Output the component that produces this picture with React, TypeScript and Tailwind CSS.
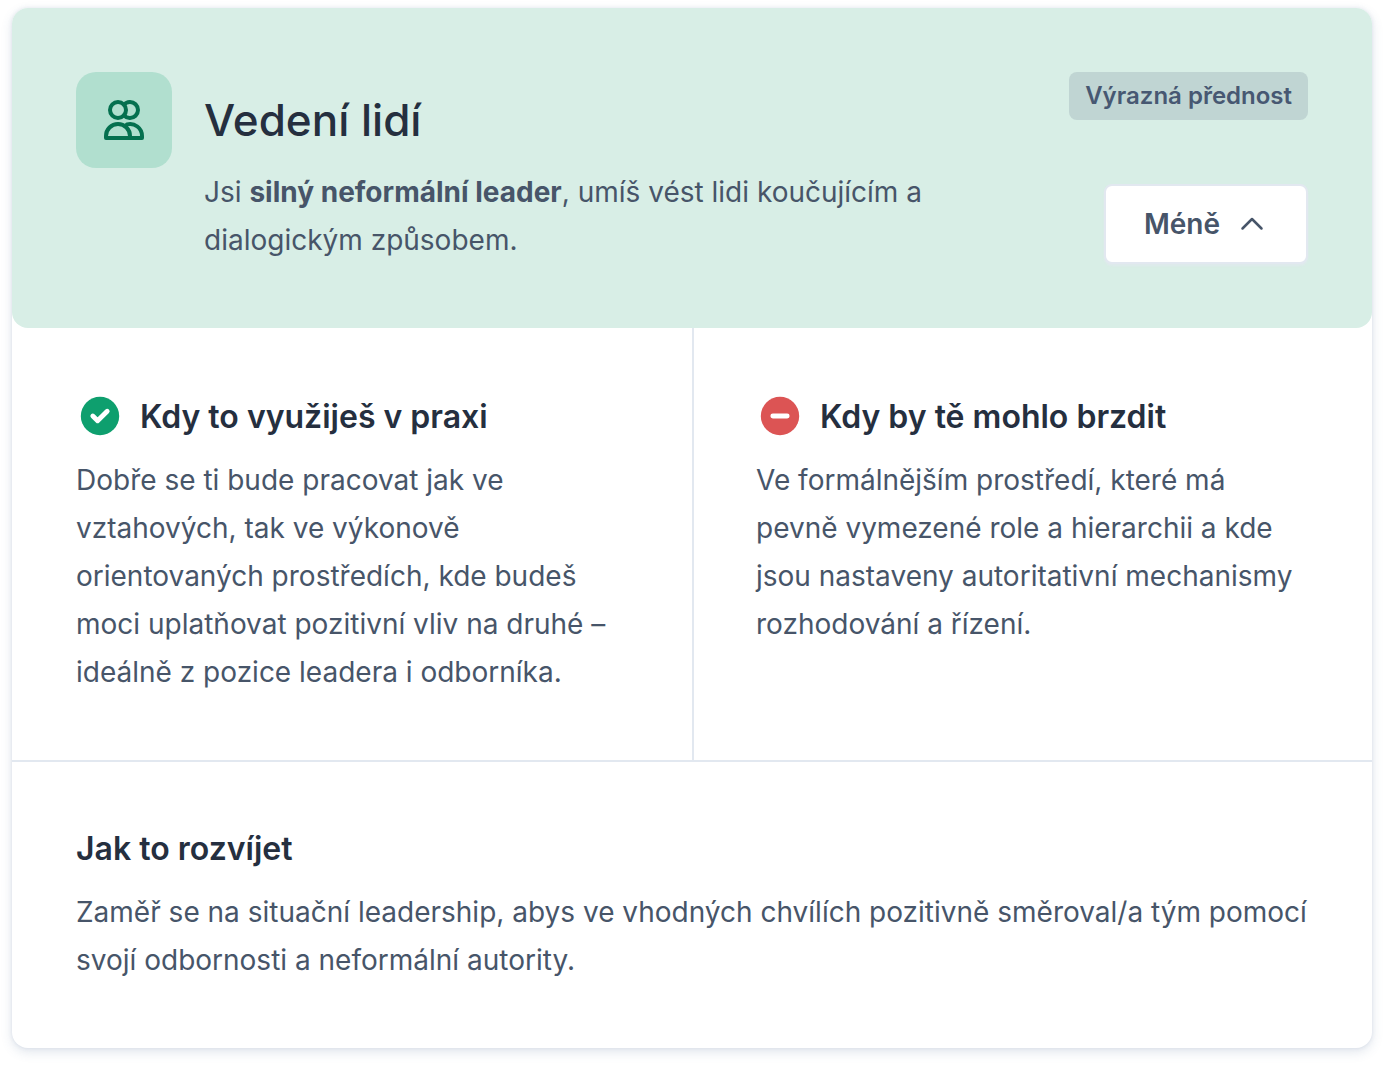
import React, { useState } from 'react';

interface DetailProps {
  title: string;
  className: string;
  icon?: React.ReactNode;
  children: React.ReactNode;
}

const PeopleIcon = () => (
  <svg
    className="h-12 w-12 text-[#05704f]"
    viewBox="0 0 48 48"
    fill="none"
    stroke="currentColor"
    strokeWidth="4"
    strokeLinecap="round"
    strokeLinejoin="round"
    aria-hidden="true"
  >
    <circle cx="18" cy="14" r="8" />
    <path d="M24 8.7A8 8 0 1 1 24 19.3" />
    <path d="M6 42v-2a12 12 0 0 1 24 0v2z" />
    <path d="M30 42h12v-2a12 12 0 0 0-15-11.6" />
  </svg>
);

const CheckIcon = () => (
  <svg className="h-12 w-12" viewBox="0 0 48 48" fill="none" aria-hidden="true">
    <circle cx="24" cy="24" r="19.2" fill="#0e9f6e" />
    <path d="M16.8 24l4.8 4.8 9.6-9.6" stroke="#fff" strokeWidth="4.8" strokeLinecap="round" strokeLinejoin="round" />
  </svg>
);

const MinusIcon = () => (
  <svg className="h-12 w-12" viewBox="0 0 48 48" fill="none" aria-hidden="true">
    <circle cx="24" cy="24" r="19.2" fill="#dc5454" />
    <path d="M16.8 24h14.4" stroke="#fff" strokeWidth="4.8" strokeLinecap="round" />
  </svg>
);

const Detail: React.FC<DetailProps> = ({ title, className, icon, children }) => (
  <div className={className}>
    <div className="mb-4 flex h-12 items-center gap-4">
      {icon}
      <h3 className="pt-px text-[32px] leading-[48px] font-semibold text-[#252f3f]">{title}</h3>
    </div>
    <p className="text-[28px] leading-[48px]">{children}</p>
  </div>
);

const App = () => {
  const [open, setOpen] = useState(true);

  return (
    <main className="px-3 pt-2 pb-5 font-['Inter',sans-serif] text-[#475569] antialiased">
      <article className="rounded-2xl bg-white shadow-[0_4px_12px_rgba(71,98,144,0.16),0_0_4px_rgba(71,98,144,0.12)]">
        <header className="flex items-start justify-between rounded-2xl bg-[#d8eee6] p-16">
          <div className="flex gap-8">
            <div className="flex h-24 w-24 shrink-0 items-center justify-center rounded-[20px] bg-[#b1dfcf]">
              <PeopleIcon />
            </div>
            <div className="max-w-[760px]">
              <h2 className="flex h-24 items-center text-[44px] font-medium text-[#252f3f]">Vedení lidí</h2>
              <p className="text-[28px] leading-[48px]">
                Jsi <strong className="font-bold">silný neformální leader</strong>, umíš vést lidi koučujícím a
                dialogickým způsobem.
              </p>
            </div>
          </div>
          <div className="flex shrink-0 flex-col items-end gap-16">
            <span className="rounded-lg bg-[#c0d5d3] px-4 text-2xl leading-[48px] font-semibold text-[#475872]">
              Výrazná přednost
            </span>
            <button
              type="button"
              className="flex h-20 items-center gap-4 rounded-lg border-2 border-[#e2e8f0] bg-white px-[38px] text-[28px] font-semibold shadow-[0_2px_2px_rgba(226,232,240,0.6)]"
              aria-expanded={open}
              onClick={() => setOpen(!open)}
            >
              {open ? 'Méně' : 'Více'}
              <svg
                className={open ? 'h-8 w-8' : 'h-8 w-8 rotate-180'}
                viewBox="0 0 32 32"
                fill="none"
                stroke="currentColor"
                strokeWidth="2.5"
                strokeLinecap="round"
                strokeLinejoin="round"
                aria-hidden="true"
              >
                <path d="M6.5 20.5l9.5-9.5 9.5 9.5" />
              </svg>
            </button>
          </div>
        </header>

        {open && (
          <>
            <div className="grid grid-cols-2">
              <Detail title="Kdy to využiješ v praxi" className="p-16" icon={<CheckIcon />}>
                Dobře se ti bude pracovat jak ve vztahových, tak ve výkonově orientovaných prostředích, kde budeš
                moci uplatňovat pozitivní vliv na druhé – ideálně z pozice leadera i odborníka.
              </Detail>
              <Detail
                title="Kdy by tě mohlo brzdit"
                className="border-l-2 border-[#e2e8f0] py-16 pr-16 pl-[62px]"
                icon={<MinusIcon />}
              >
                Ve formálnějším prostředí, které má pevně vymezené role a hierarchii a kde jsou nastaveny
                autoritativní mechanismy rozhodování a řízení.
              </Detail>
            </div>
            <Detail title="Jak to rozvíjet" className="border-t-2 border-[#e2e8f0] px-16 pt-[62px] pb-16">
              Zaměř se na situační leadership, abys ve vhodných chvílích pozitivně směroval/a tým pomocí svojí
              odbornosti a neformální autority.
            </Detail>
          </>
        )}
      </article>
    </main>
  );
};

export default App;
